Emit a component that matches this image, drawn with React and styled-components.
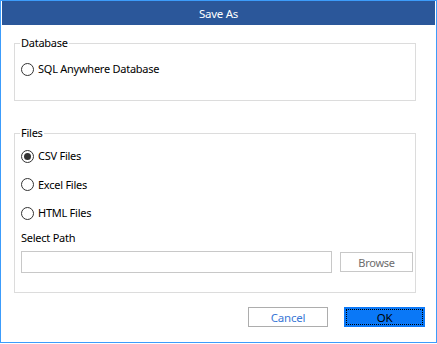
import React from "react";
import styled, { createGlobalStyle } from "styled-components";

const Global = createGlobalStyle`
  html, body { margin: 0; padding: 0; background: #ffffff; }
  body {
    font-family: "Noto Sans", "Open Sans", sans-serif;
    font-size: 11px;
    letter-spacing: -0.25px;
    color: #000;
  }
  * { box-sizing: border-box; }
`;

const Window = styled.div`
  width: 437px;
  height: 343px;
  border: 1px solid #3c9cfb;
  background: #fff;
  display: flex;
  flex-direction: column;
`;

const TitleBar = styled.div`
  height: 24px;
  margin: 0 1px;
  background: #2b579a;
  color: #fff;
  display: flex;
  align-items: center;
  justify-content: center;
  font-size: 11.5px;
  padding-top: 1px;
`;

const Body = styled.div`
  flex: 1;
  display: flex;
  flex-direction: column;
  padding: 10px 0 0 13px;
`;

const Group = styled.fieldset`
  width: 402px;
  height: ${(p) => p.$h}px;
  margin: 0 0 ${(p) => p.$mb || 0}px 0;
  padding: 0 0 0 6px;
  border: 1px solid #dcdcdc;
  min-width: 0;
  display: flex;
  flex-direction: column;
`;

const Legend = styled.legend`
  padding: 0 1px;
  margin-left: -1px;
  line-height: 16px;
`;

const Options = styled.div`
  display: flex;
  flex-direction: column;
  gap: ${(p) => p.$gap || 0}px;
  padding-top: ${(p) => p.$pt || 0}px;
`;

const RadioRow = styled.label`
  display: flex;
  align-items: center;
  gap: 4px;
  height: 16px;
  line-height: 16px;
`;

const RadioCircle = styled.span`
  width: 13px;
  height: 13px;
  border-radius: 50%;
  border: 1px solid #333;
  background: #fff;
  display: flex;
  align-items: center;
  justify-content: center;
  flex: none;
  &::after {
    content: "";
    width: 7px;
    height: 7px;
    border-radius: 50%;
    background: ${(p) => (p.$checked ? "#333" : "transparent")};
  }
`;

const FieldLabel = styled.div`
  margin-top: 9px;
  line-height: 16px;
`;

const PathRow = styled.div`
  display: flex;
  align-items: center;
  gap: 8px;
  margin-top: 5px;
`;

const PathInput = styled.div`
  width: 311px;
  height: 22px;
  border: 1px solid #c8c8c8;
  background: #fff;
`;

const BrowseButton = styled.div`
  width: 73px;
  height: 20px;
  border: 1px solid #c8c8c8;
  color: #6d6d6d;
  display: flex;
  align-items: center;
  justify-content: center;
  background: #fff;
`;

const Footer = styled.div`
  display: flex;
  justify-content: flex-end;
  gap: 16px;
  padding: 14px 11px 0 0;
`;

const Button = styled.div`
  width: ${(p) => p.$w}px;
  height: 20px;
  display: flex;
  align-items: center;
  justify-content: center;
  border: 1px solid ${(p) => (p.$primary ? "#0a78f7" : "#adadad")};
  background: ${(p) => (p.$primary ? "#0a78f7" : "#fff")};
  color: ${(p) => (p.$primary ? "#000" : "#3a77d6")};
  font-size: 11.5px;
  position: relative;
  ${(p) =>
    p.$primary &&
    `&::after {
      content: "";
      position: absolute;
      inset: 1px;
      border: 1px dotted #000;
    }`}
`;

const Radio = ({ checked, children }) => (
  <RadioRow>
    <RadioCircle $checked={checked} />
    <span>{children}</span>
  </RadioRow>
);

export default function App() {
  return (
    <>
      <Global />
      <Window>
        <TitleBar>Save As</TitleBar>
        <Body>
          <Group $h={66} $mb={24}>
            <Legend>Database</Legend>
            <Options $pt={10}>
              <Radio>SQL Anywhere Database</Radio>
            </Options>
          </Group>
          <Group $h={168}>
            <Legend>Files</Legend>
            <Options $pt={7} $gap={12.5}>
              <Radio checked>CSV Files</Radio>
              <Radio>Excel Files</Radio>
              <Radio>HTML Files</Radio>
            </Options>
            <FieldLabel>Select Path</FieldLabel>
            <PathRow>
              <PathInput />
              <BrowseButton>Browse</BrowseButton>
            </PathRow>
          </Group>
          <Footer>
            <Button $w={80}>Cancel</Button>
            <Button $w={81} $primary>OK</Button>
          </Footer>
        </Body>
      </Window>
    </>
  );
}
